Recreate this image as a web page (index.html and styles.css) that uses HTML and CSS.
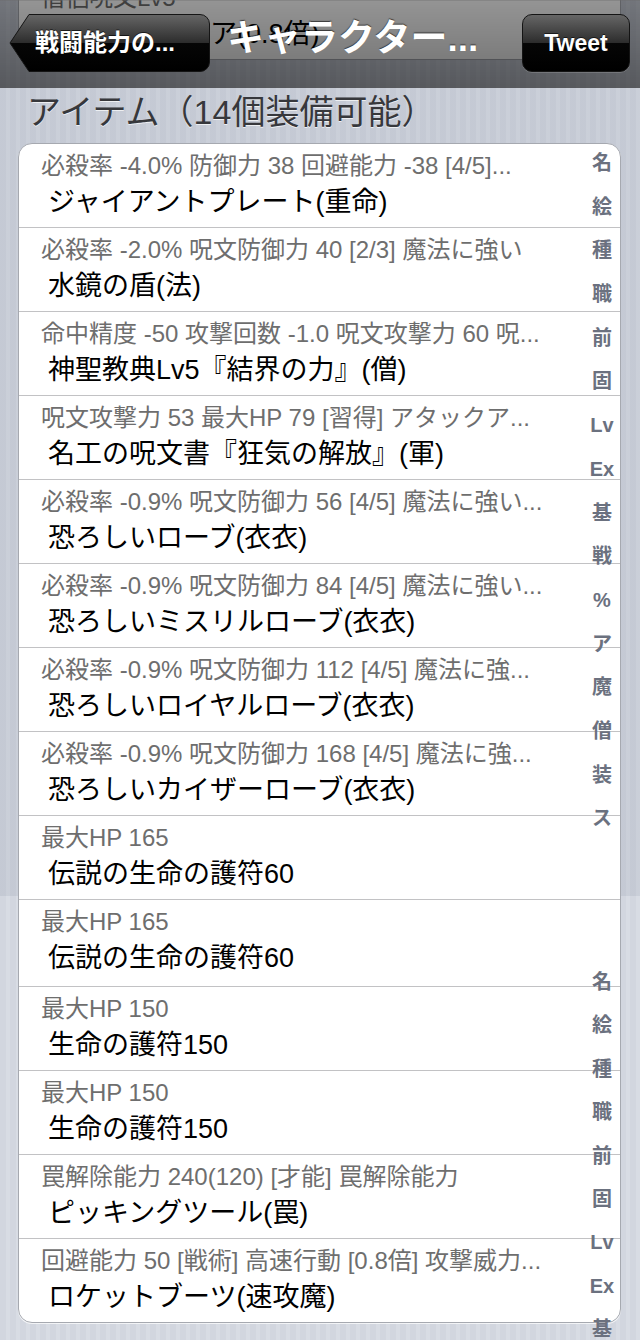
FILE: index.html
```html
<!DOCTYPE html>
<html lang="ja">
<head>
<meta charset="utf-8">
<title>キャラクター</title>
<link rel="stylesheet" href="styles.css">
</head>
<body>
<header class="navbar">
  <div class="ghost-card">
    <div class="sub">僧侶呪文Lv5</div>
    <div class="main ghost-main">高速行動ア(0.8倍)</div>
  </div>
  <div class="nav-tint"></div>
  <a class="back-btn">
    <svg class="back-shape" width="202" height="58" viewBox="0 0 202 58">
      <defs>
        <linearGradient id="bg" x1="0" y1="0" x2="0" y2="1">
          <stop offset="0" stop-color="#666"/>
          <stop offset="0.5" stop-color="#2c2c2c"/>
          <stop offset="0.5" stop-color="#060606"/>
          <stop offset="1" stop-color="#000"/>
        </linearGradient>
      </defs>
      <path d="M21 0.5 H192 A9.5 9.5 0 0 1 201.5 10 V48 A9.5 9.5 0 0 1 192 57.5 H21 L2 29 Z" fill="url(#bg)" stroke="#151515" stroke-width="1"/>
    </svg>
    <span class="back-label">戦闘能力の...</span>
  </a>
  <h1 class="title">キャラクター...</h1>
  <a class="tweet-btn">Tweet</a>
</header>

<h2 class="section-title">アイテム（14個装備可能）</h2>

<ul class="card">
  <li class="row"><div class="sub">必殺率 -4.0% 防御力 38 回避能力 -38 [4/5]...</div><div class="main">ジャイアントプレート(重命)</div></li>
  <li class="row"><div class="sub">必殺率 -2.0% 呪文防御力 40 [2/3] 魔法に強い</div><div class="main">水鏡の盾(法)</div></li>
  <li class="row"><div class="sub">命中精度 -50 攻撃回数 -1.0 呪文攻撃力 60 呪...</div><div class="main">神聖教典Lv5『結界の力』(僧)</div></li>
  <li class="row"><div class="sub">呪文攻撃力 53 最大HP 79 [習得] アタックア...</div><div class="main">名工の呪文書『狂気の解放』(軍)</div></li>
  <li class="row"><div class="sub">必殺率 -0.9% 呪文防御力 56 [4/5] 魔法に強い...</div><div class="main">恐ろしいローブ(衣衣)</div></li>
  <li class="row"><div class="sub">必殺率 -0.9% 呪文防御力 84 [4/5] 魔法に強い...</div><div class="main">恐ろしいミスリルローブ(衣衣)</div></li>
  <li class="row"><div class="sub">必殺率 -0.9% 呪文防御力 112 [4/5] 魔法に強...</div><div class="main">恐ろしいロイヤルローブ(衣衣)</div></li>
  <li class="row"><div class="sub">必殺率 -0.9% 呪文防御力 168 [4/5] 魔法に強...</div><div class="main">恐ろしいカイザーローブ(衣衣)</div></li>
  <li class="row"><div class="sub">最大HP 165</div><div class="main">伝説の生命の護符60</div></li>
  <li class="row row-tall"><div class="sub">最大HP 165</div><div class="main">伝説の生命の護符60</div></li>
  <li class="row"><div class="sub">最大HP 150</div><div class="main">生命の護符150</div></li>
  <li class="row"><div class="sub">最大HP 150</div><div class="main">生命の護符150</div></li>
  <li class="row"><div class="sub">罠解除能力 240(120) [才能] 罠解除能力</div><div class="main">ピッキングツール(罠)</div></li>
  <li class="row"><div class="sub">回避能力 50 [戦術] 高速行動 [0.8倍] 攻撃威力...</div><div class="main">ロケットブーツ(速攻魔)</div></li>
</ul>

<ol class="index index-a">
  <li>名</li><li>絵</li><li>種</li><li>職</li><li>前</li><li>固</li><li>Lv</li><li>Ex</li>
  <li>基</li><li>戦</li><li>%</li><li>ア</li><li>魔</li><li>僧</li><li>装</li><li>ス</li>
</ol>
<ol class="index index-b">
  <li>名</li><li>絵</li><li>種</li><li>職</li><li>前</li><li>固</li><li>Lv</li><li>Ex</li><li>基</li>
</ol>
</body>
</html>
```

FILE: styles.css
```css
* { box-sizing: border-box; }

html, body { margin: 0; padding: 0; }

body {
  width: 640px;
  height: 1340px;
  overflow: hidden;
  position: relative;
  font-family: "Liberation Sans", "Noto Sans CJK JP", sans-serif;
  background:
    linear-gradient(to bottom, rgba(40, 55, 85, 0.08) 0, rgba(40, 55, 85, 0.08) 896px, transparent 896px),
    repeating-linear-gradient(90deg, #d2d6df 0 6px, #d8dce4 6px 10px);
}

/* ---------- nav bar ---------- */
.navbar {
  position: relative;
  height: 88px;
  display: flex;
  align-items: flex-start;
  padding: 14px 10px 0 8px;
  overflow: hidden;
}

.ghost-card {
  position: absolute;
  left: 18px;
  right: 19px;
  top: -30px;
  height: 90px;
  background: #fff;
  border: 1px solid #a6a9b0;
  border-radius: 0 0 14px 14px;
  padding: 13px 0 0 22px;
}

.main.ghost-main { padding-left: 61px; }

.nav-tint {
  position: absolute;
  inset: 0;
  background: linear-gradient(to bottom, rgba(0, 0, 0, 0.42), rgba(0, 0, 0, 0.56));
  border-top: 1px solid rgba(255, 255, 255, 0.15);
}

.back-btn {
  position: relative;
  width: 202px;
  height: 58px;
  flex: none;
  display: block;
}

.back-shape {
  position: absolute;
  left: 0;
  top: 0;
}

.back-label {
  position: relative;
  display: block;
  padding-left: 27px;
  line-height: 58px;
  font-size: 24px;
  font-weight: bold;
  color: #fff;
  text-shadow: 0 -1px 0 rgba(0, 0, 0, 0.6);
  white-space: nowrap;
}

.title {
  position: relative;
  flex: 1;
  margin: 0 0 0 17px;
  font-size: 37px;
  line-height: 50px;
  font-weight: bold;
  color: #fff;
  white-space: nowrap;
  overflow: hidden;
  text-shadow: 0 -1px 1px rgba(0, 0, 0, 0.6);
}

.tweet-btn {
  position: relative;
  flex: none;
  width: 108px;
  height: 58px;
  line-height: 56px;
  text-align: center;
  font-size: 23px;
  font-weight: bold;
  color: #fff;
  border: 1px solid #141414;
  border-radius: 10px;
  background: linear-gradient(to bottom, #666 0%, #2c2c2c 50%, #060606 50%, #000 100%);
  text-shadow: 0 -1px 0 rgba(0, 0, 0, 0.6);
  box-shadow: 0 1px 0 rgba(255, 255, 255, 0.15);
}

/* ---------- section ---------- */
.section-title {
  margin: 0;
  height: 55px;
  padding: 4px 0 0 27px;
  font-size: 34px;
  line-height: 40px;
  font-weight: normal;
  color: #37383c;
  text-shadow: 0 1px 0 rgba(255, 255, 255, 0.7);
}

.card {
  list-style: none;
  margin: 0 19px 0 18px;
  padding: 0;
  background: #fff;
  border: 1px solid #a6a9b0;
  border-radius: 14px;
  overflow: hidden;
  box-shadow: 0 1px 0 rgba(255, 255, 255, 0.7);
}

.row {
  height: 84px;
  padding: 8px 66px 0 22px;
  border-bottom: 1px solid #c2c2c4;
}

.row-tall { height: 87px; }

.row:last-child {
  height: 83px;
  border-bottom: none;
}

.sub {
  font-size: 24px;
  line-height: 28px;
  height: 28px;
  color: #6e6e6e;
  white-space: nowrap;
  overflow: hidden;
}

.main {
  margin-top: 4px;
  padding-left: 7px;
  font-size: 27px;
  line-height: 36px;
  height: 36px;
  color: #000;
  white-space: nowrap;
  overflow: hidden;
}

/* ---------- index overlay ---------- */
.index {
  position: absolute;
  left: 584px;
  width: 36px;
  margin: 0;
  padding: 0;
  list-style: none;
  font-size: 20px;
  font-weight: bold;
  color: #6b717f;
  text-align: center;
}

.index-a { top: 142px; }
.index-a li { height: 43.7px; line-height: 43.7px; }

.index-b { top: 961px; }
.index-b li { height: 43.4px; line-height: 43.4px; }
```
